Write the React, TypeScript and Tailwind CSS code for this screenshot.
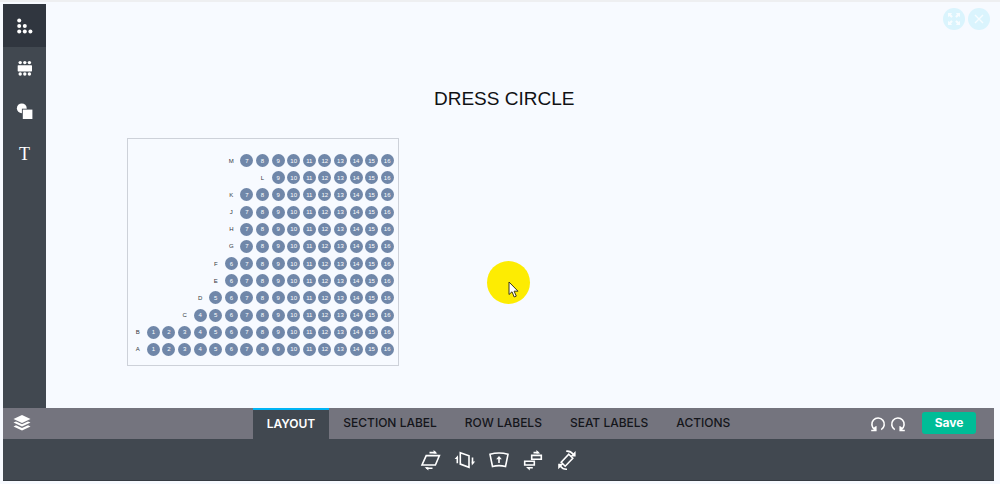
import React, { useState } from "react";

type IconProps = { children: React.ReactNode; className?: string };

function Icon({ children, className = "size-5" }: IconProps) {
  return (
    <svg viewBox="0 0 20 20" fill="none" stroke="currentColor" strokeWidth="1.6" className={className} aria-hidden="true">
      {children}
    </svg>
  );
}

const rows = [
  { label: "M", first: 7 },
  { label: "L", first: 9 },
  { label: "K", first: 7 },
  { label: "J", first: 7 },
  { label: "H", first: 7 },
  { label: "G", first: 7 },
  { label: "F", first: 6 },
  { label: "E", first: 6 },
  { label: "D", first: 5 },
  { label: "C", first: 4 },
  { label: "B", first: 1 },
  { label: "A", first: 1 },
];
const LAST_SEAT = 16;

const tools = [
  {
    name: "Seats",
    icon: (
      <g fill="currentColor" stroke="none">
        <circle cx="4.2" cy="4.4" r="2" />
        <circle cx="4.2" cy="9.9" r="2" />
        <circle cx="9.8" cy="9.9" r="2" />
        <circle cx="4.2" cy="15.4" r="2" />
        <circle cx="9.8" cy="15.4" r="2" />
        <circle cx="15.4" cy="15.4" r="2" />
      </g>
    ),
  },
  {
    name: "Tables",
    icon: (
      <g fill="currentColor" stroke="none">
        <circle cx="5.2" cy="3.6" r="1.7" />
        <circle cx="9.8" cy="3.6" r="1.7" />
        <circle cx="14.4" cy="3.6" r="1.7" />
        <rect x="2.7" y="6.2" width="14.3" height="6.2" rx="0.6" />
        <circle cx="5.2" cy="15" r="1.7" />
        <circle cx="9.8" cy="15" r="1.7" />
        <circle cx="14.4" cy="15" r="1.7" />
      </g>
    ),
  },
  {
    name: "Shapes",
    icon: (
      <g fill="currentColor" stroke="none">
        <circle cx="6.8" cy="6.3" r="4.9" />
        <rect x="6.9" y="6.7" width="11" height="10.4" fill="#414850" />
        <rect x="7.8" y="7.6" width="9.6" height="9.4" />
      </g>
    ),
  },
];

const tabs = ["LAYOUT", "SECTION LABEL", "ROW LABELS", "SEAT LABELS", "ACTIONS"];

const layoutActions = [
  {
    name: "Skew horizontally",
    icon: (
      <>
        <path d="M5.2 5.6H18.4L14.4 15H1Z" />
        <path d="M8.5 2.6H15M5 18.2H11.5" />
        <path d="M12.6 0L16.4 3.4H12.6ZM7.4 20.6L3.6 17.3H7.4Z" fill="currentColor" stroke="none" />
      </>
    ),
  },
  {
    name: "Skew vertically",
    icon: (
      <>
        <path d="M5.3 2.7L14 5.7V17.3L5.3 14.1Z" />
        <path d="M2.3 7V13.2M17.5 7.5V13.5" />
        <path d="M-.4 9L3 5.2V9ZM20.2 11.5L16.8 15.4V11.5Z" fill="currentColor" stroke="none" />
      </>
    ),
  },
  {
    name: "Curve rows",
    icon: (
      <>
        <path d="M1 4.3Q10 1.6 19 4.3L16.5 16.5Q10 14.8 3.5 16.5Z" />
        <path d="M10 13V8" />
        <path d="M7.2 9.2L10 6L12.8 9.2Z" fill="currentColor" stroke="none" />
      </>
    ),
  },
  {
    name: "Stagger rows",
    icon: (
      <>
        <path d="M8.7 5.4H18.3V9.2H8.7ZM1.7 11.2H11.3V15H1.7Z" />
        <path d="M10.5 2.6H15.5M4.8 17.8H9.8" />
        <path d="M13.4 0L17.2 3.4H13.4ZM6.8 20.4L3 17H6.8Z" fill="currentColor" stroke="none" />
      </>
    ),
  },
  {
    name: "Rotate",
    icon: (
      <>
        <path d="M11.8 4.2L15.8 8.2L8.2 16.2L4.2 12.2Z" />
        <path d="M9.2 1.2Q13.4 .8 16.2 4.2M3.2 16Q6 19.6 10 19.2" />
        <path d="M18.6 1V6.4H13.2ZM1.2 19.2V13.8H6.6Z" fill="currentColor" stroke="none" />
      </>
    ),
  },
];

function SeatBlock() {
  return (
    <div className="absolute top-[134px] left-[81px] grid h-[228px] w-[272px] auto-rows-fr border border-[#cdd1d9] pt-[13px] pr-[3px] pb-[7px] pl-[2px]">
      {rows.map(({ label, first }) => (
        <div key={label} className="grid grid-cols-17 place-items-center">
          <span
            className="text-[6px] leading-none text-[#33373d]"
            style={{ gridColumnStart: first }}
          >
            {label}
          </span>
          {Array.from({ length: LAST_SEAT - first + 1 }, (_, i) => (
            <span
              key={i}
              className="flex size-[13px] items-center justify-center rounded-full bg-[#7087a9] text-[6px] leading-none text-white"
            >
              {first + i}
            </span>
          ))}
        </div>
      ))}
    </div>
  );
}

export default function App() {
  const [tab, setTab] = useState("LAYOUT");

  return (
    <div className="flex min-h-screen flex-col border-t-2 border-[#eeeff1] bg-[#f7faff] pt-0.5 pr-1.5 pb-[3px] pl-[3px] font-['Inter','Liberation_Sans',sans-serif]">
      <div className="flex flex-1">
        <nav aria-label="Tools" className="flex w-[43px] shrink-0 flex-col bg-[#414850] text-white">
          {tools.map((tool, i) => (
            <button
              key={tool.name}
              aria-label={tool.name}
              className={
                i === 0
                  ? "flex h-[43px] items-center justify-center bg-[#30363f]"
                  : "flex h-[43px] items-center justify-center"
              }
            >
              <Icon>{tool.icon}</Icon>
            </button>
          ))}
          <button
            aria-label="Text"
            className="flex h-[42px] items-center justify-center font-['Liberation_Serif',serif] text-lg leading-none"
          >
            T
          </button>
        </nav>

        <main className="relative min-h-[403px] flex-1 overflow-hidden font-['Liberation_Sans',sans-serif]">
          <h1 className="absolute top-[83px] left-[388px] text-[19px] leading-6 whitespace-nowrap text-[#101114]">
            DRESS CIRCLE
          </h1>
          <SeatBlock />

          <div className="absolute top-[257px] left-[441px] size-[43px] rounded-full bg-[#fdec02]">
            <svg viewBox="0 0 12 18" className="absolute top-[20px] left-[21px] h-[18px] w-3" aria-hidden="true">
              <path
                d="M1 1V13.5L4 10.8L6.2 16L8.3 15.1L6.1 10.2H10Z"
                fill="#fff"
                stroke="#3b3818"
                strokeWidth="1"
              />
            </svg>
          </div>

          <div className="absolute top-1 right-1 flex gap-[3px] text-[#f7fcff]">
            <button aria-label="Fit to screen" className="flex size-[22px] items-center justify-center rounded-full bg-[#daf4fd]">
              <svg viewBox="0 0 14 14" className="size-3.5" fill="currentColor" aria-hidden="true">
                <path d="M1 1H5.2L4 2.2L5.8 4.4L4.4 5.8L2.2 4L1 5.2ZM13 1V5.2L11.8 4L9.6 5.8L8.2 4.4L10 2.2L8.8 1ZM1 13V8.8L2.2 10L4.4 8.2L5.8 9.6L4 11.8L5.2 13ZM13 13H8.8L10 11.8L8.2 9.6L9.6 8.2L11.8 10L13 8.8Z" />
              </svg>
            </button>
            <button aria-label="Close" className="flex size-[22px] items-center justify-center rounded-full bg-[#daf4fd]">
              <svg viewBox="0 0 14 14" className="size-3.5" fill="none" stroke="currentColor" strokeWidth="1.4" aria-hidden="true">
                <path d="M3 3L11 11M11 3L3 11" />
              </svg>
            </button>
          </div>
        </main>
      </div>

      <div className="grid h-[31px] grid-cols-[1fr_auto_1fr] items-stretch bg-[#74747e]">
        <div className="flex items-center pb-0.5 pl-[9px] text-white">
          <button aria-label="Layers">
            <Icon className="size-5">
              <g fill="currentColor" stroke="none">
                <path d="M10 2L18.5 6L10 10L1.5 6Z" />
                <path d="M1.5 9.6L4 8.5L10 11.3L16 8.5L18.5 9.6L10 13.6Z" />
                <path d="M1.5 13.4L4 12.3L10 15.1L16 12.3L18.5 13.4L10 17.4Z" />
              </g>
            </Icon>
          </button>
        </div>

        <div role="tablist" className="flex">
          {tabs.map((name) => (
            <button
              key={name}
              role="tab"
              aria-selected={name === tab}
              onClick={() => setTab(name)}
              className={
                name === tab
                  ? "border-t-2 border-[#00b4f5] bg-[#414850] px-3.5 pb-0.5 text-xs font-semibold whitespace-nowrap text-white"
                  : "px-3.5 pb-0.5 text-xs font-medium whitespace-nowrap text-[#14161b]"
              }
            >
              {name}
            </button>
          ))}
        </div>

        <div className="flex items-center justify-end pr-[18px] pb-0.5 text-white">
          <button aria-label="Undo">
            <Icon className="size-5">
              <path d="M6.6 16.4A6.2 6.2 0 1 1 13.2 16.6" />
              <path d="M8.6 13V18.2H3.2V16.8H6L5 15.6L7.2 13.6Z" fill="currentColor" stroke="none" />
            </Icon>
          </button>
          <button aria-label="Redo">
            <Icon className="size-5">
              <path d="M6.8 16.6A6.2 6.2 0 1 1 13.4 16.4" />
              <path d="M11.4 13V18.2H16.8V16.8H14L15 15.6L12.8 13.6Z" fill="currentColor" stroke="none" />
            </Icon>
          </button>
          <button className="ml-3.5 h-[22px] w-[54px] rounded-[3px] bg-[#00bd97] text-xs font-bold">Save</button>
        </div>
      </div>

      <div role="toolbar" aria-label="Layout" className="flex h-[42px] items-center justify-center gap-3.5 border-b border-[#343a41] bg-[#414850] text-white">
        {layoutActions.map((action) => (
          <button key={action.name} aria-label={action.name}>
            <Icon className="size-5 overflow-visible">{action.icon}</Icon>
          </button>
        ))}
      </div>
    </div>
  );
}
